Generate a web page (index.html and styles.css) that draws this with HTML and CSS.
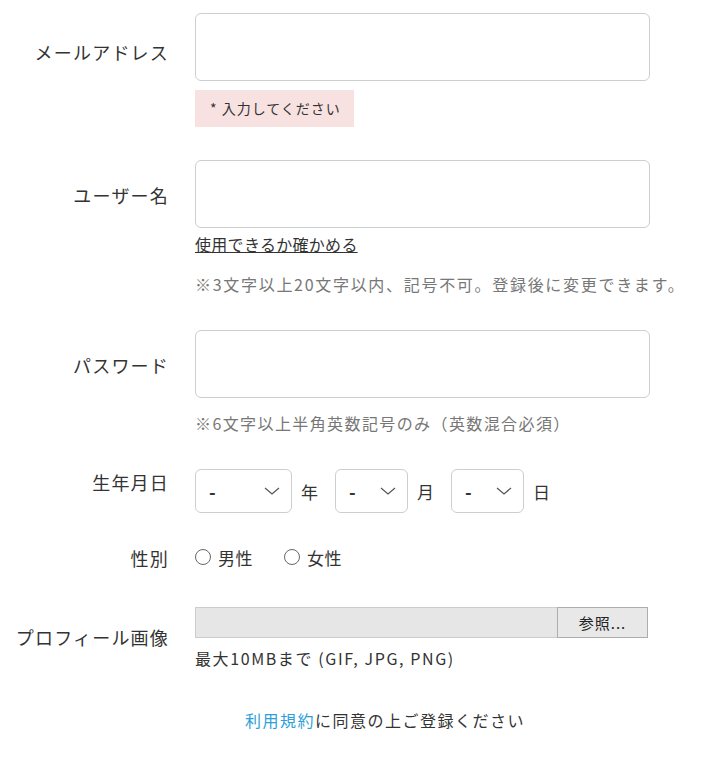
FILE: index.html
```html
<!DOCTYPE html>
<html lang="ja">
<head>
    <meta charset="UTF-8">
    <meta name="viewport" content="width=device-width, initial-scale=1.0">
    <title>会員登録</title>
    <link rel="stylesheet" href="styles.css">
</head>
<body>
    <form class="signup">
        <div class="row">
            <label class="label label-email" for="email">メールアドレス</label>
            <div class="field">
                <input type="text" id="email" class="text-input">
                <div class="error">* 入力してください</div>
            </div>
        </div>

        <div class="row row-user">
            <label class="label" for="username">ユーザー名</label>
            <div class="field">
                <input type="text" id="username" class="text-input">
                <a href="#" class="check-link">使用できるか確かめる</a>
                <p class="note note-user">※3文字以上20文字以内、記号不可。登録後に変更できます。</p>
            </div>
        </div>

        <div class="row row-pass">
            <label class="label" for="password">パスワード</label>
            <div class="field">
                <input type="password" id="password" class="text-input">
                <p class="note note-pass">※6文字以上半角英数記号のみ（英数混合必須）</p>
            </div>
        </div>

        <div class="row row-birth">
            <label class="label label-birth">生年月日</label>
            <div class="field date-group">
                <div class="select-wrap year">
                    <select><option>-</option></select>
                    <svg class="chevron" width="16" height="8" viewBox="0 0 16 8"><path d="M1 1 L8 7 L15 1" fill="none" stroke="#555" stroke-width="1.2"/></svg>
                </div>
                <span class="unit">年</span>
                <div class="select-wrap">
                    <select><option>-</option></select>
                    <svg class="chevron" width="16" height="8" viewBox="0 0 16 8"><path d="M1 1 L8 7 L15 1" fill="none" stroke="#555" stroke-width="1.2"/></svg>
                </div>
                <span class="unit">月</span>
                <div class="select-wrap">
                    <select><option>-</option></select>
                    <svg class="chevron" width="16" height="8" viewBox="0 0 16 8"><path d="M1 1 L8 7 L15 1" fill="none" stroke="#555" stroke-width="1.2"/></svg>
                </div>
                <span class="unit">日</span>
            </div>
        </div>

        <div class="row row-gender">
            <label class="label label-gender">性別</label>
            <div class="field radio-group">
                <label class="radio"><input type="radio" name="gender"><span class="dot"></span>男性</label>
                <label class="radio"><input type="radio" name="gender"><span class="dot"></span>女性</label>
            </div>
        </div>

        <div class="row row-file">
            <label class="label label-file">プロフィール画像</label>
            <div class="field">
                <div class="file-box">
                    <span class="file-name"></span>
                    <button type="button" class="file-btn">参照...</button>
                </div>
                <p class="file-help">最大10MBまで (GIF, JPG, PNG)</p>
            </div>
        </div>

        <p class="terms"><a href="#">利用規約</a>に同意の上ご登録ください</p>
    </form>
</body>
</html>
```

FILE: styles.css
```css
body {
    margin: 0;
    font-family: "Noto Sans CJK JP", "Noto Sans", sans-serif;
    color: #333;
    background-color: #fff;
}
.signup {
    width: 716px;
    padding-top: 13px;
}
.row {
    display: flex;
    gap: 26px;
}
.label {
    width: 169px;
    flex-shrink: 0;
    text-align: right;
    font-size: 18px;
    line-height: 24px;
    letter-spacing: 1.2px;
    padding-top: 23px;
    box-sizing: border-box;
}
.label-email {
    padding-top: 27px;
}
.field {
    width: 455px;
}
.text-input {
    display: block;
    width: 455px;
    height: 68px;
    box-sizing: border-box;
    border: 1px solid #cbcfcf;
    border-radius: 6px;
    font-size: 16px;
    padding: 0 12px;
}
.error {
    display: inline-block;
    margin-top: 9px;
    padding: 0 13px 0 15px;
    height: 37px;
    line-height: 37px;
    font-size: 14px;
    letter-spacing: 1px;
    background-color: #f8e2e1;
    color: #333;
}
.row-user {
    margin-top: 33px;
}
.check-link {
    display: inline-block;
    margin-top: 4px;
    font-size: 16px;
    line-height: 24px;
    letter-spacing: 0.3px;
    color: #333;
}
.note {
    margin: 0;
    font-size: 16px;
    line-height: 24px;
    letter-spacing: 1.4px;
    color: #777;
    white-space: nowrap;
}
.note-user {
    margin-top: 16px;
    letter-spacing: 1.7px;
}
.row-pass {
    margin-top: 34px;
}
.note-pass {
    margin-top: 13px;
}
.row-birth {
    margin-top: 34px;
}
.label-birth {
    padding-top: 1px;
}
.date-group {
    display: flex;
    align-items: center;
}
.select-wrap {
    position: relative;
    width: 73px;
    height: 44px;
}
.select-wrap.year {
    width: 97px;
}
.select-wrap select {
    appearance: none;
    width: 100%;
    height: 100%;
    border: 1px solid #cbcfcf;
    border-radius: 6px;
    background-color: #fff;
    padding-left: 13px;
    font-family: inherit;
    font-size: 18px;
    font-weight: bold;
    color: #333;
}
.chevron {
    position: absolute;
    right: 12px;
    top: 18px;
    pointer-events: none;
}
.unit {
    font-size: 17px;
    margin: 0 17px 0 9px;
}
.unit:last-child {
    margin-right: 0;
}
.row-gender {
    margin-top: 33px;
    align-items: center;
}
.label-gender {
    padding-top: 0;
}
.radio-group {
    display: flex;
    gap: 31px;
    height: 24px;
    align-items: center;
}
.radio {
    display: flex;
    align-items: center;
    gap: 7px;
    font-size: 17px;
    line-height: 24px;
    letter-spacing: 0.5px;
}
.radio input {
    display: none;
}
.dot {
    width: 16px;
    height: 16px;
    box-sizing: border-box;
    border: 1px solid #666;
    border-radius: 50%;
    margin-top: -3px;
}
.row-file {
    margin-top: 37px;
}
.label-file {
    padding-top: 18px;
}
.file-box {
    display: flex;
    width: 453px;
    height: 31px;
}
.file-name {
    flex: 1;
    background-color: #e6e6e6;
    border: 1px solid #ccc;
    border-right: none;
}
.file-btn {
    width: 91px;
    background-color: #e8e8e8;
    border: 1px solid #adadad;
    font-family: inherit;
    font-size: 15px;
    color: #222;
    letter-spacing: 1px;
    padding: 0;
}
.file-help {
    margin: 8px 0 0;
    font-size: 16px;
    line-height: 24px;
    letter-spacing: 1.6px;
    color: #333;
}
.terms {
    margin: 38px 0 0;
    text-align: center;
    padding-left: 54px;
    font-size: 16px;
    line-height: 24px;
    letter-spacing: 1.5px;
    color: #333;
}
.terms a {
    color: #2c9fd9;
    text-decoration: none;
}
```
